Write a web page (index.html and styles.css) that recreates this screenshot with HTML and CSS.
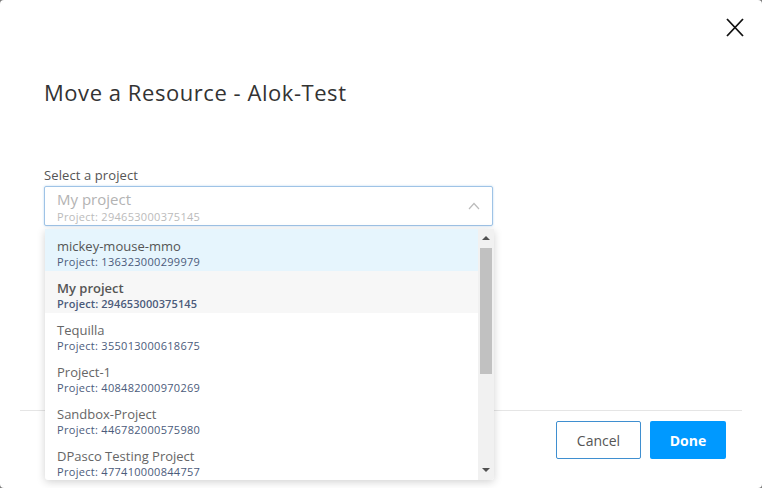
FILE: index.html
```html
<!DOCTYPE html>
<html>
<head>
<meta charset="utf-8">
<link rel="stylesheet" href="styles.css">
</head>
<body>
<div class="modal">
  <div class="top">
    <button class="close" aria-label="Close">
      <svg width="18" height="19" viewBox="0 0 18 19"><path d="M1 1 L17 18 M17 1 L1 18" stroke="#111" stroke-width="1.8" fill="none"/></svg>
    </button>
  </div>
  <h1 class="title">Move a Resource - Alok-Test</h1>
  <div class="field">
    <div class="label">Select a project</div>
    <div class="select">
      <div class="sel-text">
        <div class="sel-name">My project</div>
        <div class="sel-id">Project: 294653000375145</div>
      </div>
      <svg class="chev" width="12" height="8" viewBox="0 0 12 8"><path d="M1 7 L6 1.5 L11 7" stroke="#bbb" stroke-width="1.2" fill="none"/></svg>
      <div class="menu">
        <div class="list">
          <div class="item hover"><div class="name">mickey-mouse-mmo</div><div class="pid">Project: 136323000299979</div></div>
          <div class="item selected"><div class="name">My project</div><div class="pid">Project: 294653000375145</div></div>
          <div class="item"><div class="name">Tequilla</div><div class="pid">Project: 355013000618675</div></div>
          <div class="item"><div class="name">Project-1</div><div class="pid">Project: 408482000970269</div></div>
          <div class="item"><div class="name">Sandbox-Project</div><div class="pid">Project: 446782000575980</div></div>
          <div class="item"><div class="name">DPasco Testing Project</div><div class="pid">Project: 477410000844757</div></div>
        </div>
        <div class="scrollbar">
          <div class="arrow up"></div>
          <div class="thumb"></div>
          <div class="arrow down"></div>
        </div>
      </div>
    </div>
  </div>
  <div class="spacer"></div>
  <div class="footer">
    <button class="btn cancel">Cancel</button>
    <button class="btn done">Done</button>
  </div>
</div>
</body>
</html>
```
FILE: styles.css
```css
* { box-sizing: border-box; }
html, body { margin: 0; padding: 0; background: #7a7a7a; }
body { width: 762px; height: 488px; overflow: hidden; font-family: "Open Sans", Lato, Arial, sans-serif; }
.modal {
  width: 762px; height: 488px; background: #fff; border-radius: 4px;
  display: flex; flex-direction: column;
}
.top { display: flex; justify-content: flex-end; padding: 18px 18px 0 0; height: 38px; }
.close { border: 0; background: none; padding: 0; width: 18px; height: 19px; cursor: pointer; }
.close svg { display: block; }
.title {
  margin: 39px 0 0 44px; font-size: 22px; font-weight: 400; color: #333;
  line-height: 30px; letter-spacing: 0.55px;
}
.field { margin: 60px 0 0 44px; width: 449px; }
.label { font-size: 13px; color: #555; line-height: 16px; margin-bottom: 3px; letter-spacing: 0.1px; }
.select {
  position: relative; height: 40px; border: 1px solid #9fc3e6; border-radius: 2px;
  box-shadow: 0 0 2px rgba(102, 170, 230, 0.5);
  display: flex; align-items: center; padding: 0 12px;
}
.sel-text { flex: 1; padding-top: 1px; }
.sel-name { font-size: 15px; color: #b3b3b3; line-height: 19px; }
.sel-id { font-size: 11px; color: #bbb; line-height: 15px; letter-spacing: 0.3px; }
.menu {
  position: absolute; left: 0; top: 42px; width: 449px; height: 251px;
  background: #fff; display: flex; overflow: hidden;
  box-shadow: 0 2px 8px rgba(0,0,0,0.18); border-radius: 0 0 3px 3px;
}
.list { flex: 1; }
.item { height: 42px; padding: 9px 12px 0; }
.item.hover { background: #e6f5fd; }
.item.selected { background: #f7f7f7; }
.name { font-size: 13px; color: #666; line-height: 17px; }
.pid { font-size: 11px; color: #4b5b7b; line-height: 13px; letter-spacing: 0.3px; }
.item.selected .name { color: #555; font-weight: 600; }
.item.selected .pid { font-weight: 600; color: #4b5b7b; letter-spacing: 0.1px; }
.item.hover .name { color: #555; }
.scrollbar {
  width: 16px; background: #f1f1f1; display: flex; flex-direction: column; align-items: center;
  position: relative;
}
.arrow { width: 0; height: 0; border-left: 4px solid transparent; border-right: 4px solid transparent; }
.arrow.up { border-bottom: 4px solid #505050; margin-top: 7px; }
.arrow.down { border-top: 4px solid #505050; position: absolute; bottom: 8px; }
.thumb { width: 12px; height: 126px; background: #c1c1c1; margin-top: 8px; }
.spacer { flex: 1; }
.footer {
  margin: 0 20px; border-top: 1px solid #e5e5e5; height: 78px;
  display: flex; justify-content: flex-end; align-items: flex-start; padding: 10px 16px 0 0; gap: 9px;
}
.btn { height: 38px; border-radius: 2px; font-family: inherit; font-size: 14px; cursor: pointer; }
.cancel { width: 85px; background: #fff; border: 1px solid #3f8fd0; color: #555; }
.done { width: 76px; background: #0099ff; border: 0; color: #fff; font-weight: 700; }
```
